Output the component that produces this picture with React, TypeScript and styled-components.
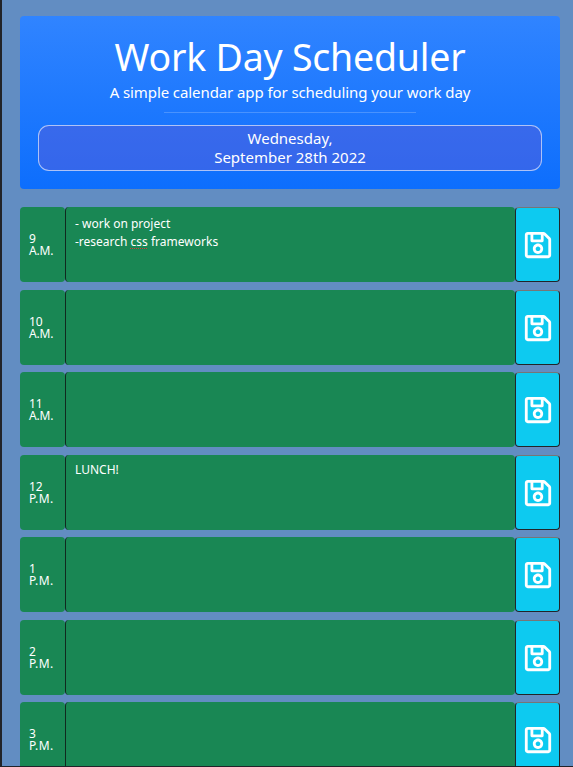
import React from 'react';
import styled, { createGlobalStyle } from 'styled-components';
import { FaRegSave } from 'react-icons/fa';

const GlobalStyle = createGlobalStyle`
  * { box-sizing: border-box; }
  body {
    margin: 0;
    overflow: hidden;
    font-family: "Noto Sans", "Liberation Sans", sans-serif;
    color: #fff;
  }
`;

const Page = styled.div`
  height: 767px;
  overflow: hidden;
  padding: 16px 13px 0 18px;
  background: #628dc2;
  border-left: 2px solid #212329;
  border-bottom: 1px solid #212329;
`;

const Header = styled.header`
  height: 173px;
  padding: 18px;
  border-radius: 4px;
  background: linear-gradient(#3084ff, #0d6efd);
  text-align: center;
`;

const Title = styled.h1`
  margin: 0;
  font-size: 37.5px;
  line-height: 45px;
  font-weight: 400;
  letter-spacing: -0.22px;
`;

const Lead = styled.p`
  margin: 2px 0 0;
  font-size: 15px;
  line-height: 22px;
  letter-spacing: -0.09px;
`;

const Rule = styled.hr`
  width: 252px;
  height: 1px;
  margin: 9px auto 11.5px;
  border: 0;
  background: rgba(255, 255, 255, 0.2);
`;

const DateBox = styled.div`
  height: 46.75px;
  padding-top: 3.5px;
  border: 1px solid rgba(255, 255, 255, 0.6);
  border-radius: 11px;
  background: rgba(76, 96, 224, 0.6);
  font-size: 15px;
  line-height: 19px;
`;

const Schedule = styled.main`
  display: flex;
  flex-direction: column;
  gap: 7.5px;
  padding-top: 18.25px;
`;

const Row = styled.section`
  display: flex;
  flex: none;
  height: 75px;
`;

const Hour = styled.div`
  display: flex;
  flex-direction: column;
  justify-content: center;
  width: 45px;
  padding: 0.6px 9px 0;
  border-radius: 4px;
  background: #198754;
  font-size: 12px;
  line-height: 12px;
`;

const Period = styled.span<{ $morning: boolean }>`
  letter-spacing: ${({ $morning }) => ($morning ? '-0.15px' : '0.4px')};
`;

const Notes = styled.div<{ $singleLine: boolean }>`
  flex: 1;
  padding: ${({ $singleLine }) => ($singleLine ? '6px' : '8px')} 9px;
  border-left: 1px solid #10291f;
  border-radius: 4px;
  background: #198754;
  font-size: 12px;
  line-height: 18px;
  white-space: pre-line;
`;

const Misspelled = styled.span`
  text-decoration: underline dotted #d53b34 1px;
  text-underline-offset: 2px;
  text-decoration-skip-ink: none;
`;

const SaveButton = styled.button`
  display: flex;
  align-items: center;
  justify-content: center;
  width: 45px;
  padding: 0.6px 0 0;
  border: 1.5px solid;
  border-color: #767676 #212529 #212529 #212529;
  border-radius: 4px;
  background: #0dcaf0;
  color: #fff;
  font-size: 30px;
`;

const slots: { hour: string; period: string; notes?: React.ReactNode }[] = [
  {
    hour: '9',
    period: 'A.M.',
    notes: <>- work on project{'\n'}-research <Misspelled>css</Misspelled> frameworks</>,
  },
  { hour: '10', period: 'A.M.' },
  { hour: '11', period: 'A.M.' },
  { hour: '12', period: 'P.M.', notes: 'LUNCH!' },
  { hour: '1', period: 'P.M.' },
  { hour: '2', period: 'P.M.' },
  { hour: '3', period: 'P.M.' },
];

export default function App() {
  return (
    <Page>
      <GlobalStyle />
      <Header>
        <Title>Work Day Scheduler</Title>
        <Lead>A simple calendar app for scheduling your work day</Lead>
        <Rule />
        <DateBox>
          Wednesday,
          <br />
          September 28th 2022
        </DateBox>
      </Header>
      <Schedule>
        {slots.map(({ hour, period, notes }) => (
          <Row key={hour}>
            <Hour>
              <span>{hour}</span>
              <Period $morning={period === 'A.M.'}>{period}</Period>
            </Hour>
            <Notes $singleLine={typeof notes === 'string'}>{notes}</Notes>
            <SaveButton aria-label="Save">
              <FaRegSave />
            </SaveButton>
          </Row>
        ))}
      </Schedule>
    </Page>
  );
}
